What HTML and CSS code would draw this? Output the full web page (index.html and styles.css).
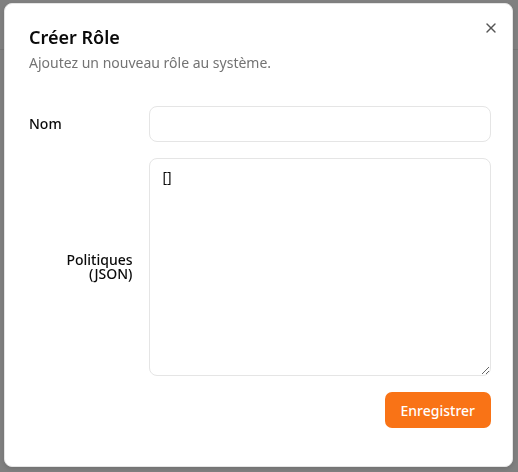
FILE: index.html
```html
<!DOCTYPE html>
<html lang="fr">
<head>
<meta charset="utf-8">
<title>Créer Rôle</title>
<link rel="stylesheet" href="styles.css">
</head>
<body>
<div class="page">
  <div class="page-header"></div>
</div>
<div class="overlay">
  <div class="dialog" role="dialog">
    <button class="close" aria-label="Fermer">
      <svg width="16" height="16" viewBox="0 0 24 24" fill="none" stroke="currentColor" stroke-width="2" stroke-linecap="round" stroke-linejoin="round"><path d="M18 6 6 18"/><path d="m6 6 12 12"/></svg>
    </button>
    <div class="header">
      <h2 class="title">Créer Rôle</h2>
      <p class="desc">Ajoutez un nouveau rôle au système.</p>
    </div>
    <form class="form">
      <div class="row">
        <label class="label label-left" for="nom">Nom</label>
        <input class="input" id="nom" type="text">
      </div>
      <div class="row">
        <label class="label label-right" for="pol">Politiques (JSON)</label>
        <textarea class="textarea" id="pol" rows="10">[]</textarea>
      </div>
      <div class="footer">
        <button type="button" class="btn">Enregistrer</button>
      </div>
    </form>
  </div>
</div>
</body>
</html>
```
FILE: styles.css
```css
* { box-sizing: border-box; }
html, body { margin: 0; padding: 0; }
body {
  font-family: "Noto Sans", "Open Sans", sans-serif;
  background: #808080;
  width: 518px;
  height: 472px;
  overflow: hidden;
}
.page { height: 472px; }
.page-header {
  height: 50px;
  border-bottom: 1px solid #767676;
}
.overlay {
  position: fixed;
  inset: 0;
  padding: 3px 0 0 4px;
}
.dialog {
  position: relative;
  width: 509px;
  height: 464px;
  background: #fff;
  border: 1px solid #e5e5e5;
  border-radius: 8px;
  padding: 24px 21px 24px 24px;
  box-shadow: 0 2px 4px rgba(0,0,0,0.12);
}
.close {
  position: absolute;
  top: 16px;
  right: 13px;
  width: 16px;
  height: 16px;
  padding: 0;
  border: 0;
  background: none;
  color: #555;
  display: flex;
}
.header { display: flex; flex-direction: column; gap: 7px; }
.title {
  margin: 0;
  font-size: 18px;
  line-height: 18px;
  font-weight: 600;
  color: #0a0a0a;
}
.desc {
  margin: 0;
  font-size: 14px;
  line-height: 20px;
  color: #737373;
}
.form {
  margin-top: 33px;
  display: flex;
  flex-direction: column;
  gap: 16px;
}
.row {
  display: grid;
  grid-template-columns: repeat(4, 1fr);
  gap: 16px;
  align-items: center;
}
.label {
  font-size: 14px;
  line-height: 14px;
  font-weight: 500;
  color: #0a0a0a;
}
.label-left { text-align: left; }
.label-right { text-align: right; }
.input, .textarea {
  grid-column: span 3;
  font-family: "Noto Sans", sans-serif;
  font-size: 14px;
  color: #0a0a0a;
  border: 1px solid #e5e5e5;
  border-radius: 8px;
  background: #fff;
  outline: none;
}
.input { height: 36px; padding: 4px 12px; }
.textarea {
  line-height: 20px;
  padding: 8px 13px;
  height: 218px;
  resize: vertical;
}
.footer { display: flex; justify-content: flex-end; }
.btn {
  height: 36px;
  padding: 0 16px;
  border: 0;
  border-radius: 7px;
  background: #f97316;
  color: #fff;
  font-family: "Noto Sans", sans-serif;
  font-size: 14px;
  font-weight: 500;
}
```
